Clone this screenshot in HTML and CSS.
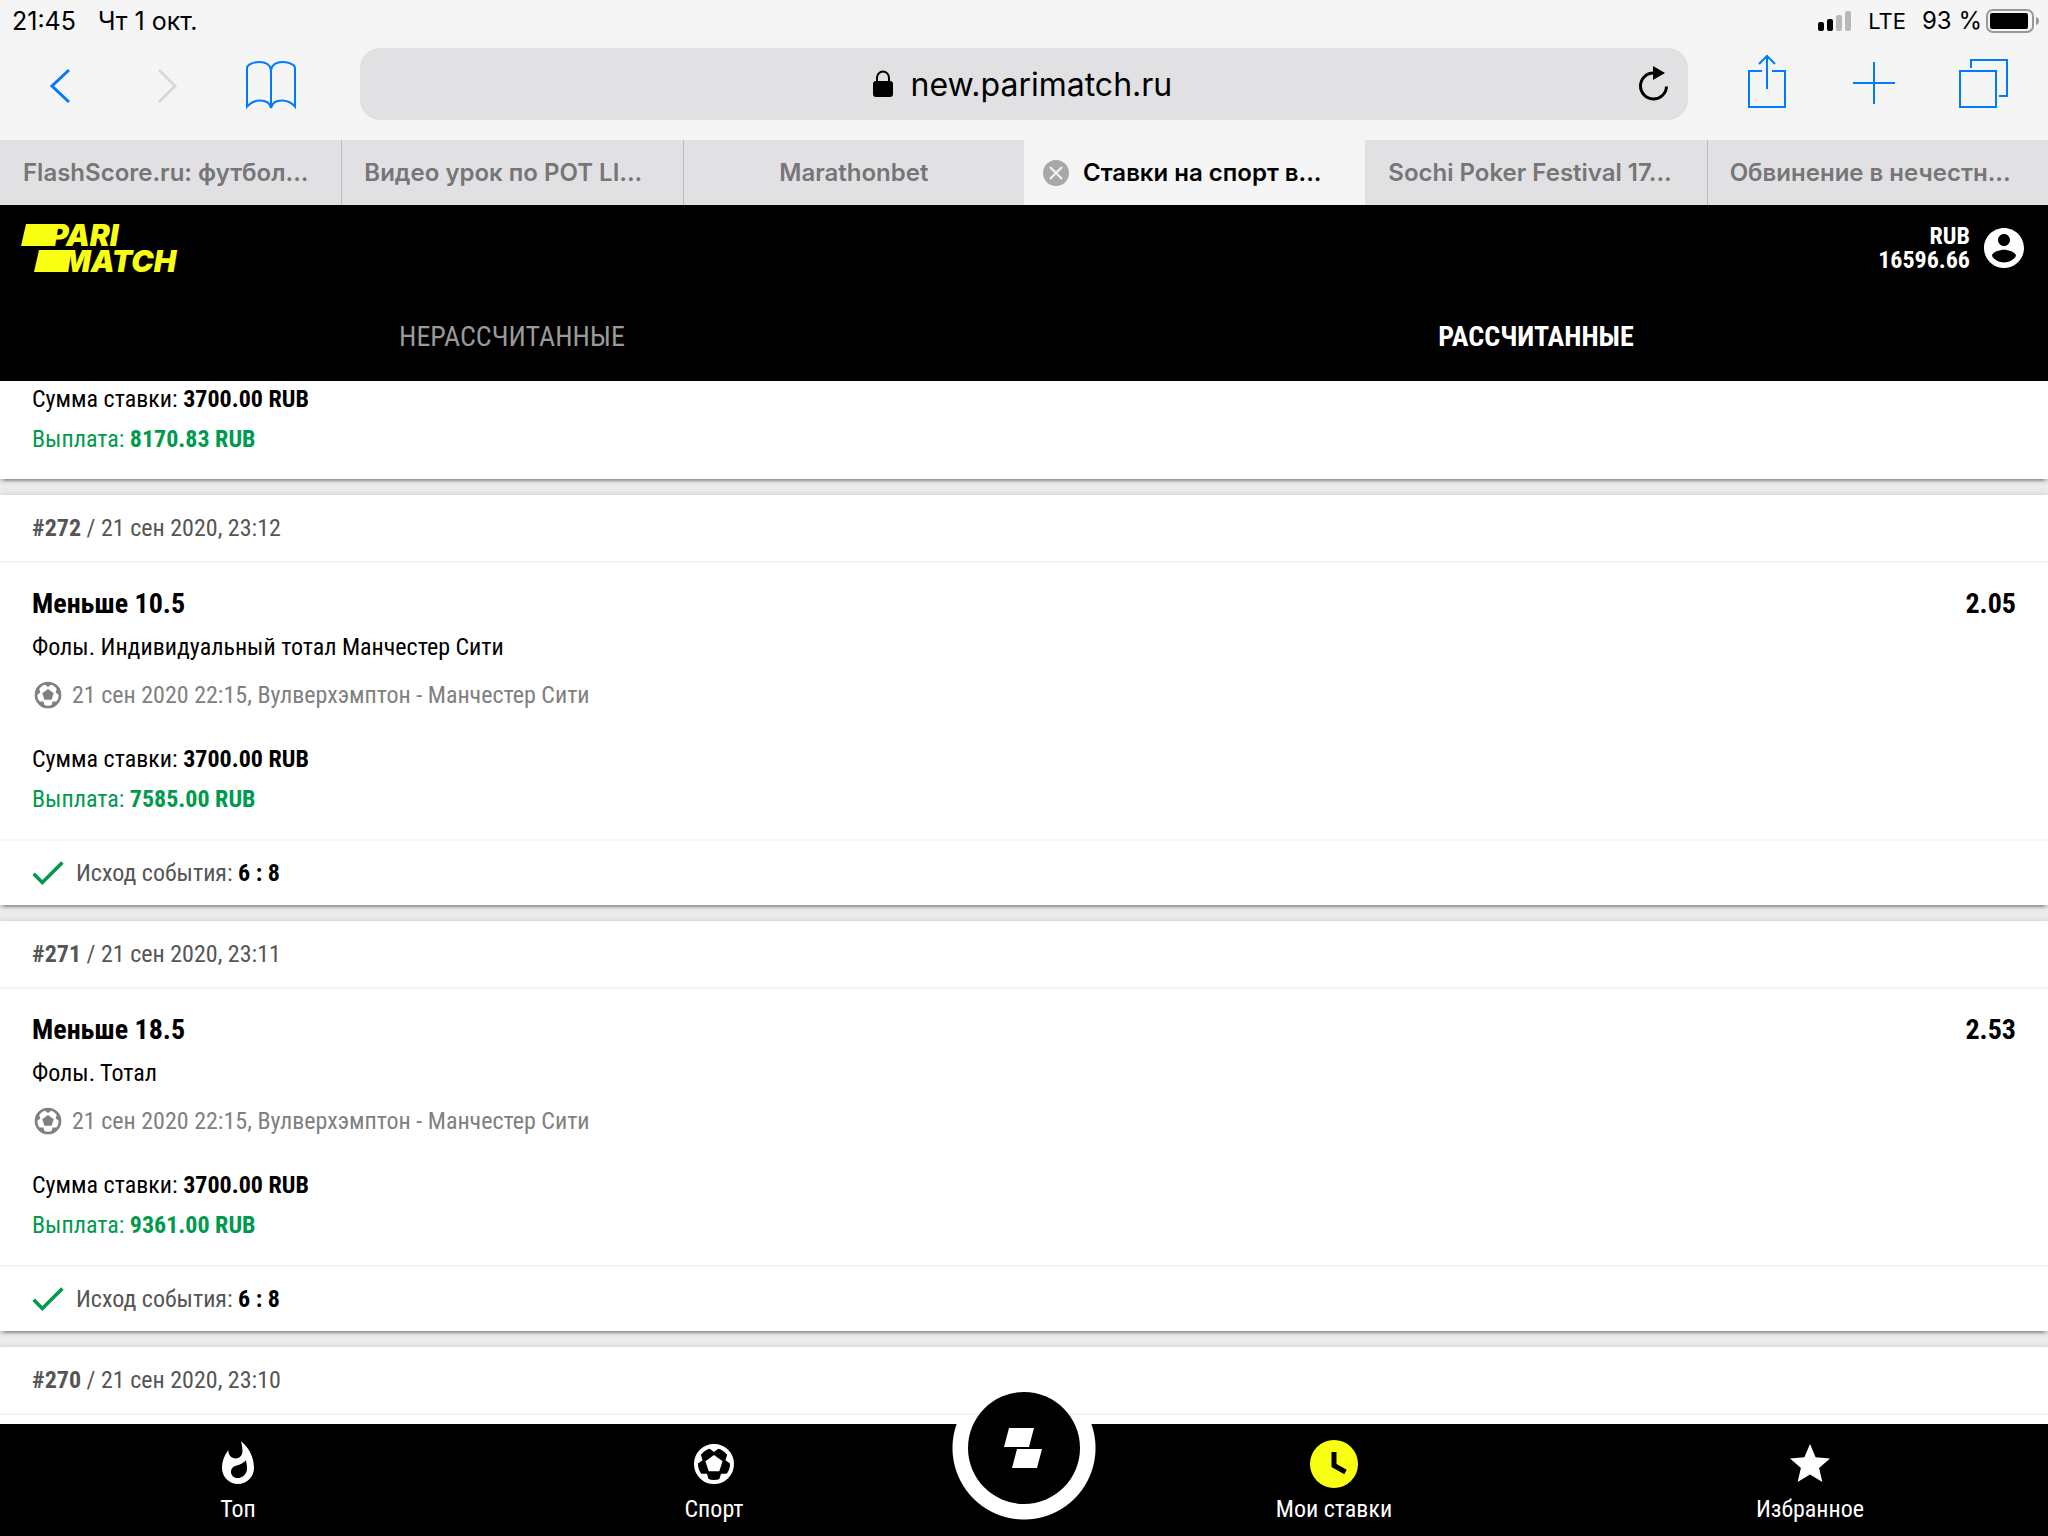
FILE: index.html
```html
<!DOCTYPE html>
<html lang="ru">
<head>
<meta charset="utf-8">
<meta name="viewport" content="width=device-width, initial-scale=1">
<title>Ставки на спорт</title>
<link rel="stylesheet" href="styles.css">
</head>
<body>
<svg class="sprite" aria-hidden="true">
  <symbol id="ball" viewBox="-24 -24 48 48">
    <circle r="18" fill="none" stroke="currentColor" stroke-width="4"/>
    <path fill="currentColor" d="M0-9 8.6-2.8 5.3 7.3H-5.3L-8.6-2.8Z"/>
    <g fill="currentColor">
      <path d="M0-12 4.6-15.4 6-18H-6L-4.6-15.4Z"/>
      <path transform="rotate(72)" d="M0-12 4.6-15.4 6-18H-6L-4.6-15.4Z"/>
      <path transform="rotate(144)" d="M0-12 4.6-15.4 6-18H-6L-4.6-15.4Z"/>
      <path transform="rotate(216)" d="M0-12 4.6-15.4 6-18H-6L-4.6-15.4Z"/>
      <path transform="rotate(288)" d="M0-12 4.6-15.4 6-18H-6L-4.6-15.4Z"/>
    </g>
  </symbol>
  <symbol id="check" viewBox="3.4 5.5 17.6 13.5">
    <path fill="currentColor" d="M9 16.17 4.83 12l-1.42 1.41L9 19 21 7l-1.41-1.41z"/>
  </symbol>
</svg>

<header class="browser">
  <div class="status">
    <div class="status__side"><span>21:45</span><span>Чт 1 окт.</span></div>
    <div class="status__side status__side--end">
      <svg width="34" height="22" viewBox="0 0 34 22" aria-hidden="true">
        <rect x="0" y="12" width="6" height="9" rx="2"/>
        <rect x="9" y="9" width="6" height="12" rx="2"/>
        <rect x="18" y="5" width="6" height="16" rx="2" fill="#b9b9b9"/>
        <rect x="27" y="1" width="6" height="20" rx="2" fill="#b9b9b9"/>
      </svg>
      <span class="status__net">LTE</span>
      <span class="status__power">93 %
        <svg width="54" height="24" viewBox="0 0 54 24" aria-hidden="true">
          <rect x="1" y="1" width="46" height="22" rx="6" fill="none" stroke="#999" stroke-width="2"/>
          <rect x="4" y="4" width="38" height="16" rx="2"/>
          <path d="M50 8q3 1 3 4t-3 4z" fill="#999"/>
        </svg>
      </span>
    </div>
  </div>

  <div class="toolbar">
    <div class="toolbar__group">
      <button class="tool" aria-label="Назад"><svg viewBox="0 0 56 64"><path stroke-width="3" d="M37 18 20 34 37 50"/></svg></button>
      <button class="tool tool--off" aria-label="Вперёд" disabled><svg viewBox="0 0 56 64"><path stroke-width="3" d="M21 18 37 34 21 50"/></svg></button>
      <button class="tool" aria-label="Закладки"><svg viewBox="0 0 56 64"><path d="M27 56V18C26 12 21 10 15 10 9 10 3 13 3 16V54.500C7 50 11 48.500 16 48.500 22 48.500 26 51 27 56 28 51 32 48.500 38 48.500 43 48.500 47 50 51 54.500V16C51 13 45 10 39 10 33 10 28 12 27 18"/></svg></button>
    </div>
    <div class="address">
      <svg class="address__lock" width="20" height="28" viewBox="0 0 20 28" aria-hidden="true">
        <rect y="11" width="20" height="16" rx="3"/>
        <path d="M4 12V8a6 6.500 0 0 1 12 0v4" fill="none" stroke="#000" stroke-width="2"/>
      </svg>
      <input class="address__input" type="text" value="new.parimatch.ru" aria-label="Адрес">
      <button class="address__reload" aria-label="Обновить">
        <svg width="32" height="38" viewBox="0 0 32 38"><path d="M28.500 22.500A13 13 0 1 1 15.500 9h3" fill="none" stroke="#000" stroke-width="3"/><path d="M15 2 27 9 15 16z"/></svg>
      </button>
    </div>
    <div class="toolbar__group toolbar__group--end">
      <button class="tool" aria-label="Поделиться"><svg viewBox="0 0 56 64"><path d="M22 19H9V55H45V19H32M27 37V5M19 12 27 4 35 12"/></svg></button>
      <button class="tool" aria-label="Новая вкладка"><svg viewBox="0 0 56 64"><path d="M5 31H47M26 10V52"/></svg></button>
      <button class="tool" aria-label="Все вкладки"><svg viewBox="0 0 56 64"><path d="M4 19H40V55H4ZM15 16V8H51V44H43"/></svg></button>
    </div>
  </div>

  <nav class="tabs">
    <a class="tab" href="#">FlashScore.ru: футбол...</a>
    <a class="tab" href="#">Видео урок по POT LI...</a>
    <a class="tab tab--short" href="#">Marathonbet</a>
    <div class="tab tab--active">
      <button class="tab__close" aria-label="Закрыть вкладку"><svg width="26" height="26" viewBox="0 0 26 26"><circle cx="13" cy="13" r="13" fill="#a8a8a8"/><path d="M7 7 19 19M19 7 7 19" stroke="#f5f5f5" stroke-width="2"/></svg></button>
      <a href="#">Ставки на спорт в...</a>
    </div>
    <a class="tab" href="#">Sochi Poker Festival 17...</a>
    <a class="tab" href="#">Обвинение в нечестн...</a>
  </nav>
</header>

<div class="site">
  <div class="site__bar">
    <a class="logo" href="#" aria-label="Parimatch">
      <svg width="160" height="50" viewBox="0 0 160 50">
        <path d="M6 1H36L31 23H1ZM19 27H49L44 49H14Z"/>
        <text x="29" y="23">PARI</text>
        <text x="42" y="49">MATCH</text>
      </svg>
    </a>
    <a class="account" href="#">
      <span class="account__sum">RUB<br>16596.66</span>
      <svg width="48" height="48" viewBox="0 0 24 24" fill="currentColor" aria-hidden="true"><path d="M12 2C6.480 2 2 6.480 2 12s4.480 10 10 10 10-4.480 10-10S17.520 2 12 2zm0 3c1.660 0 3 1.340 3 3s-1.340 3-3 3-3-1.340-3-3 1.340-3 3-3zm0 14.200c-2.500 0-4.710-1.280-6-3.220.03-1.990 4-3.080 6-3.080 1.990 0 5.970 1.090 6 3.080-1.290 1.940-3.500 3.220-6 3.220z"/></svg>
    </a>
  </div>
  <nav class="filter">
    <a class="filter__item" href="#">НЕРАССЧИТАННЫЕ</a>
    <a class="filter__item filter__item--active" href="#">РАССЧИТАННЫЕ</a>
  </nav>
</div>

<main class="bets">
  <article class="bet">
    <div class="bet__money">
      <p>Сумма ставки: <b>3700.00 RUB</b></p>
      <p class="bet__payout">Выплата: <b>8170.83 RUB</b></p>
    </div>
  </article>

  <article class="bet">
    <header class="bet__head"><b>#272</b> / 21 сен 2020, 23:12</header>
    <div class="bet__body">
      <h2 class="bet__title"><span>Меньше 10.5</span><span>2.05</span></h2>
      <p class="bet__market">Фолы. Индивидуальный тотал Манчестер Сити</p>
      <p class="bet__event"><svg width="32" height="32" aria-hidden="true"><use href="#ball"/></svg>21 сен 2020 22:15, Вулверхэмптон - Манчестер Сити</p>
    </div>
    <div class="bet__money">
      <p>Сумма ставки: <b>3700.00 RUB</b></p>
      <p class="bet__payout">Выплата: <b>7585.00 RUB</b></p>
    </div>
    <footer class="bet__result"><svg width="32" height="24" aria-hidden="true"><use href="#check"/></svg><span>Исход события: <b>6 : 8</b></span></footer>
  </article>

  <article class="bet">
    <header class="bet__head"><b>#271</b> / 21 сен 2020, 23:11</header>
    <div class="bet__body">
      <h2 class="bet__title"><span>Меньше 18.5</span><span>2.53</span></h2>
      <p class="bet__market">Фолы. Тотал</p>
      <p class="bet__event"><svg width="32" height="32" aria-hidden="true"><use href="#ball"/></svg>21 сен 2020 22:15, Вулверхэмптон - Манчестер Сити</p>
    </div>
    <div class="bet__money">
      <p>Сумма ставки: <b>3700.00 RUB</b></p>
      <p class="bet__payout">Выплата: <b>9361.00 RUB</b></p>
    </div>
    <footer class="bet__result"><svg width="32" height="24" aria-hidden="true"><use href="#check"/></svg><span>Исход события: <b>6 : 8</b></span></footer>
  </article>

  <article class="bet bet--last">
    <header class="bet__head"><b>#270</b> / 21 сен 2020, 23:10</header>
  </article>
</main>

<nav class="menu">
  <a class="menu__item" href="#">
    <svg width="48" height="48" viewBox="0 0 24 24" fill="currentColor" aria-hidden="true"><path d="M13.500.67s.74 2.650.74 4.800c0 2.060-1.350 3.730-3.410 3.730-2.070 0-3.630-1.670-3.630-3.730l.03-.36C5.210 7.510 4 10.620 4 14c0 4.420 3.580 8 8 8s8-3.580 8-8C20 8.610 17.410 3.800 13.500.67zM11.710 19c-1.780 0-3.220-1.400-3.220-3.140 0-1.620 1.050-2.760 2.810-3.120 1.770-.36 3.600-1.210 4.620-2.580.39 1.290.59 2.650.59 4.040 0 2.650-2.150 4.800-4.800 4.800z"/></svg>
    Топ
  </a>
  <a class="menu__item" href="#">
    <svg width="48" height="48" aria-hidden="true"><use href="#ball"/></svg>
    Спорт
  </a>
  <div class="menu__notch">
    <button class="menu__home" aria-label="Главная">
      <svg width="40" height="40" viewBox="0 0 40 40" fill="#fff"><path d="M5 0H30L25 19H0ZM13 21H38L33 40H8Z"/></svg>
    </button>
  </div>
  <a class="menu__item" href="#">
    <svg width="48" height="48" viewBox="0 0 48 48" aria-hidden="true"><circle cx="24" cy="24" r="24" fill="#f8ff13"/><path d="M24 12V25.500L35.500 32" fill="none" stroke="#000" stroke-width="5"/></svg>
    Мои ставки
  </a>
  <a class="menu__item" href="#">
    <svg width="48" height="48" viewBox="0 0 24 24" fill="currentColor" aria-hidden="true"><path d="M12 17.270 18.180 21l-1.640-7.030L22 9.240l-7.190-.61L12 2 9.190 8.630 2 9.240l5.460 4.730L5.820 21z"/></svg>
    Избранное
  </a>
</nav>
</body>
</html>
```
FILE: styles.css
```css
* { box-sizing: border-box; }

body {
  margin: 0;
  height: 100vh;
  display: flex;
  flex-direction: column;
  overflow: hidden;
  background: #ebebeb;
  color: #000;
  font: 24px/36px "Roboto Condensed", "Liberation Sans Narrow", Roboto, sans-serif;
}

a { color: inherit; text-decoration: none; }
p, h2 { margin: 0; }
svg { display: block; flex: none; }

button {
  padding: 0;
  border: 0;
  background: none;
  color: inherit;
  font: inherit;
}

.sprite { position: absolute; width: 0; height: 0; }

/* Browser chrome */
.browser {
  flex: none;
  background: #f5f5f5;
  font-family: Inter, "Liberation Sans", sans-serif;
}

.status {
  display: flex;
  justify-content: space-between;
  height: 40px;
  padding: 2px 8px 0 12px;
  font-size: 25px;
  line-height: 38px;
}

.status__side { display: flex; align-items: center; gap: 22px; }
.status__side--end { gap: 16px; }
.status__net { font-size: 22px; }
.status__power { display: flex; align-items: center; gap: 4px; font-size: 24px; }

.toolbar {
  display: flex;
  align-items: center;
  height: 100px;
  padding: 0 36px 12px 32px;
}

.toolbar__group { display: flex; gap: 50px; margin-right: 60px; }
.toolbar__group--end { gap: 52px; margin: 0 0 0 52px; }

.tool { width: 56px; height: 64px; color: #007aff; }
.tool--off { color: #d8d8d8; }
.tool svg {
  width: 56px;
  height: 64px;
  fill: none;
  stroke: currentColor;
  stroke-width: 2;
}

.address {
  flex: 1;
  display: flex;
  align-items: center;
  justify-content: center;
  position: relative;
  height: 72px;
  border-radius: 20px;
  background: #e1e1e3;
}

.address__lock { margin-right: 18px; }

.address__input {
  width: 265px;
  padding: 2px 0 0;
  border: 0;
  background: none;
  color: #000;
  font: 32px/40px Inter, "Liberation Sans", sans-serif;
}

.address__reload { position: absolute; right: 18px; top: 16px; }

.tabs {
  display: grid;
  grid-template-columns: repeat(6, 1fr);
  height: 65px;
}

.tab {
  display: flex;
  align-items: center;
  gap: 14px;
  padding-left: 22px;
  border-left: 1px solid #bcbcc0;
  background: #e1e1e3;
  color: #767678;
  font-weight: 600;
  white-space: nowrap;
}

.tab--short { justify-content: center; padding: 0; }

.tab:first-child,
.tab--active,
.tab--active + .tab { border-left-color: transparent; }
.tab--active { padding-left: 18px; background: #f5f5f5; color: #000; }

/* Site header */
.site { flex: none; background: #000; color: #fff; }

.site__bar {
  display: flex;
  align-items: center;
  justify-content: space-between;
  height: 86px;
  padding: 0 20px;
}

.logo svg { fill: #f8ff13; overflow: visible; }
.logo text { font: italic 900 30px Inter, sans-serif; }

.account {
  display: flex;
  align-items: center;
  gap: 10px;
  font-weight: 700;
  line-height: 24px;
  text-align: right;
}

.filter { display: flex; height: 90px; }

.filter__item {
  flex: 1;
  color: #999;
  font-size: 28px;
  line-height: 92px;
  text-align: center;
}

.filter__item--active { color: #fff; font-weight: 700; }

/* Bet list */
.bets {
  flex: 1;
  min-height: 0;
  display: flex;
  flex-direction: column;
  gap: 16px;
  overflow: hidden;
}

.bet {
  flex: none;
  background: #fff;
  box-shadow: 0 6px 2px -4px rgba(0, 0, 0, .2), 0 2px 4px rgba(0, 0, 0, .2), 0 0 6px rgba(0, 0, 0, .1);
}

.bet--last { flex: 1; }

.bet__head {
  padding: 15px 32px;
  border-bottom: 2px solid #f4f4f4;
  color: #555;
}

.bet__body { padding: 20px 32px 28px; }

.bet__title {
  display: flex;
  justify-content: space-between;
  margin-bottom: 4px;
  font-size: 28px;
  line-height: 42px;
}

.bet__event {
  display: flex;
  align-items: center;
  gap: 8px;
  margin-top: 12px;
  color: #808080;
}

.bet__money {
  display: grid;
  gap: 4px;
  padding: 0 32px 22px;
}

.bet__payout { color: #009a4e; }

.bet__result {
  display: flex;
  align-items: center;
  gap: 12px;
  height: 66px;
  padding: 0 32px;
  border-top: 2px solid #f4f4f4;
  color: #555;
}

.bet__result svg { color: #009a4e; }
.bet__result b { color: #000; }

/* Bottom menu */
.menu {
  flex: none;
  display: grid;
  grid-template-columns: 1fr 1fr 144px 1fr 1fr;
  height: 112px;
  background: #000;
  color: #fff;
}

.menu__item {
  display: flex;
  flex-direction: column;
  align-items: center;
  gap: 3px;
  padding-top: 16px;
}

.menu__notch {
  background: radial-gradient(circle at 50% 24px, #fff 71px, #000 72px);
}

.menu__home {
  display: grid;
  place-items: center;
  position: relative;
  width: 112px;
  height: 112px;
  margin: -32px auto 0;
  border-radius: 50%;
  background: #000;
}
```
